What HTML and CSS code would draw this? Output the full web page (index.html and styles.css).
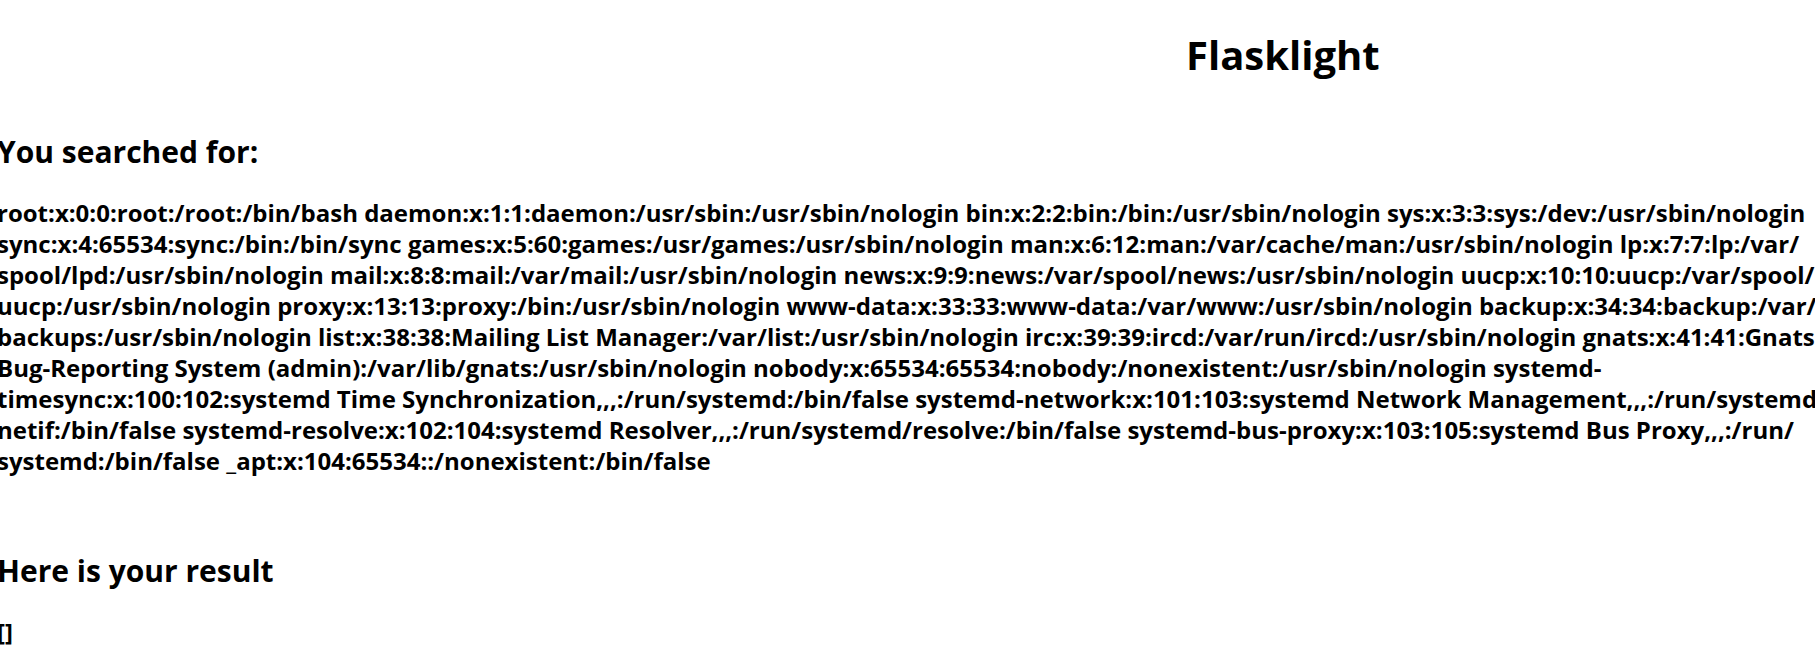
FILE: index.html
```html
<!DOCTYPE html>
<html lang="en">
<head>
<meta charset="utf-8">
<title>Flasklight</title>
<link rel="stylesheet" href="styles.css">
</head>
<body>
<main class="page">
<h1 class="title">Flasklight</h1>
<section class="section">
<h2 class="heading">You searched for:</h2>
<h3 class="output">root:x:0:0:root:/root:/bin/bash daemon:x:1:1:daemon:/usr/sbin:/usr/sbin/nologin bin:x:2:2:bin:/bin:/usr/sbin/nologin sys:x:3:3:sys:/dev:/usr/sbin/nologin<br>
sync:x:4:65534:sync:/bin:/bin/sync games:x:5:60:games:/usr/games:/usr/sbin/nologin man:x:6:12:man:/var/cache/man:/usr/sbin/nologin lp:x:7:7:lp:/var/<br>
spool/lpd:/usr/sbin/nologin mail:x:8:8:mail:/var/mail:/usr/sbin/nologin news:x:9:9:news:/var/spool/news:/usr/sbin/nologin uucp:x:10:10:uucp:/var/spool/<br>
uucp:/usr/sbin/nologin proxy:x:13:13:proxy:/bin:/usr/sbin/nologin www-data:x:33:33:www-data:/var/www:/usr/sbin/nologin backup:x:34:34:backup:/var/<br>
backups:/usr/sbin/nologin list:x:38:38:Mailing List Manager:/var/list:/usr/sbin/nologin irc:x:39:39:ircd:/var/run/ircd:/usr/sbin/nologin gnats:x:41:41:Gnats<br>
Bug-Reporting System (admin):/var/lib/gnats:/usr/sbin/nologin nobody:x:65534:65534:nobody:/nonexistent:/usr/sbin/nologin systemd-<br>
timesync:x:100:102:systemd Time Synchronization,,,:/run/systemd:/bin/false systemd-network:x:101:103:systemd Network Management,,,:/run/systemd/<br>
netif:/bin/false systemd-resolve:x:102:104:systemd Resolver,,,:/run/systemd/resolve:/bin/false systemd-bus-proxy:x:103:105:systemd Bus Proxy,,,:/run/<br>
systemd:/bin/false _apt:x:104:65534::/nonexistent:/bin/false</h3>
</section>
<section class="section">
<h2 class="heading">Here is your result</h2>
<h3 class="output">[]</h3>
</section>
</main>
</body>
</html>
```
FILE: styles.css
```css
body {
  margin: 0;
  background: #fff;
  color: #000;
  font-family: "Open Sans", "Noto Sans", sans-serif;
  overflow-x: hidden;
}

.page {
  margin-left: -3px;
  padding-top: 28px;
}

.title {
  margin: 0 0 50px;
  padding-left: 65.4%;
  font-size: 40px;
  line-height: 54px;
  font-weight: 700;
}

.section + .section {
  margin-top: 75px;
}

.heading {
  margin: 0 0 25px;
  font-size: 30px;
  line-height: 40px;
  font-weight: 700;
}

.output {
  margin: 0;
  font-size: 24px;
  line-height: 31px;
  font-weight: 700;
  white-space: nowrap;
}
```
